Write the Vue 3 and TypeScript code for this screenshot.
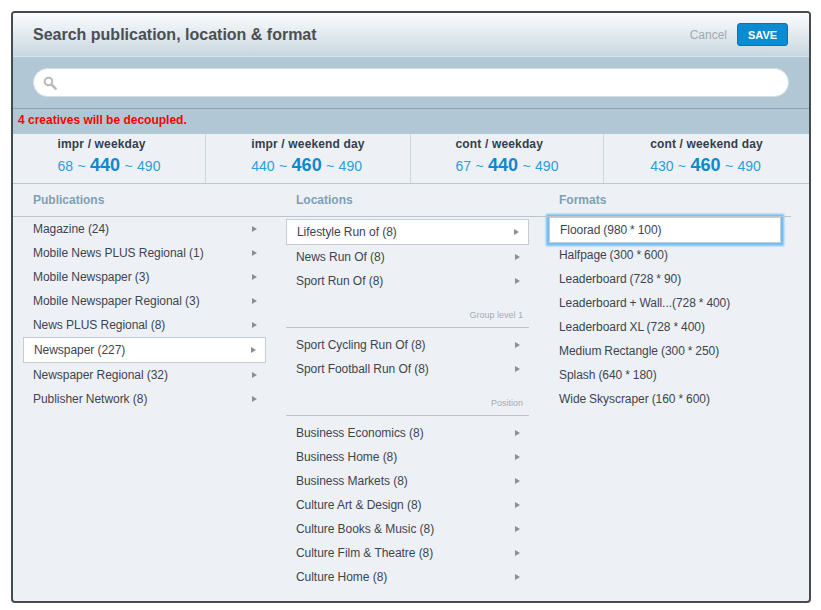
<script setup lang="ts">
interface Item { label: string; selected?: boolean }
const stats = [
  { title: 'impr / weekday', low: 68, mid: 440, high: 490 },
  { title: 'impr / weekend day', low: 440, mid: 460, high: 490 },
  { title: 'cont / weekday', low: 67, mid: 440, high: 490 },
  { title: 'cont / weekend day', low: 430, mid: 460, high: 490 },
]
const publications: Item[] = [
  { label: 'Magazine (24)' },
  { label: 'Mobile News PLUS Regional (1)' },
  { label: 'Mobile Newspaper (3)' },
  { label: 'Mobile Newspaper Regional (3)' },
  { label: 'News PLUS Regional (8)' },
  { label: 'Newspaper (227)', selected: true },
  { label: 'Newspaper Regional (32)' },
  { label: 'Publisher Network (8)' },
]
const groups: { title?: string; items: Item[] }[] = [
  { items: [{ label: 'Lifestyle Run of (8)', selected: true }, { label: 'News Run Of (8)' }, { label: 'Sport Run Of (8)' }] },
  { title: 'Group level 1', items: [{ label: 'Sport Cycling Run Of (8)' }, { label: 'Sport Football Run Of (8)' }] },
  { title: 'Position', items: [
    { label: 'Business Economics (8)' }, { label: 'Business Home (8)' }, { label: 'Business Markets (8)' },
    { label: 'Culture Art & Design (8)' }, { label: 'Culture Books & Music (8)' }, { label: 'Culture Film & Theatre (8)' }, { label: 'Culture Home (8)' },
  ] },
]
const formats = ['Halfpage (300 * 600)', 'Leaderboard (728 * 90)', 'Leaderboard + Wall...(728 * 400)', 'Leaderboard XL (728 * 400)', 'Medium Rectangle (300 * 250)', 'Splash (640 * 180)', 'Wide Skyscraper (160 * 600)']
</script>

<template>
  <div class="page">
    <section class="modal">
      <header class="head">
        <h1>Search publication, location &amp; format</h1>
        <div class="actions">
          <span class="cancel">Cancel</span>
          <button class="save" type="button">SAVE</button>
        </div>
      </header>
      <div class="search">
        <div class="field">
          <svg width="14" height="14" viewBox="0 0 14 14"><circle cx="5.5" cy="5.5" r="3.8" fill="none" stroke="#b8bbbe" stroke-width="2"/><path d="M8.5 8.5 12.6 12.6" stroke="#b8bbbe" stroke-width="2.6" stroke-linecap="round"/></svg>
        </div>
      </div>
      <div class="warn">4 creatives will be decoupled.</div>
      <div class="stats">
        <div v-for="s in stats" :key="s.title" class="stat">
          <div class="stat-in">
            <div class="stat-title">{{ s.title }}</div>
            <div class="stat-nums">{{ s.low }} ~ <b>{{ s.mid }}</b> ~ {{ s.high }}</div>
          </div>
        </div>
      </div>
      <div class="heads">
        <div class="h-pub">Publications</div>
        <div class="h-loc">Locations</div>
        <div class="h-fmt">Formats</div>
      </div>
      <div class="cols">
        <div class="col pub">
          <div v-for="i in publications" :key="i.label" class="row" :class="{ sel: i.selected }">
            <span>{{ i.label }}</span><i class="arrow"></i>
          </div>
        </div>
        <div class="col loc">
          <div v-for="(g, n) in groups" :key="n" class="group">
            <div v-if="g.title" class="group-title">{{ g.title }}</div>
            <div v-for="i in g.items" :key="i.label" class="row" :class="{ sel: i.selected }">
              <span>{{ i.label }}</span><i class="arrow"></i>
            </div>
          </div>
        </div>
        <div class="col fmt">
          <div class="row focus"><span>Floorad (980 * 100)</span></div>
          <div v-for="f in formats" :key="f" class="row"><span>{{ f }}</span></div>
        </div>
      </div>
    </section>
  </div>
</template>

<style>
html, body { background: #fff; }
</style>

<style scoped>
.page { width: 821px; height: 610px; padding: 11px 10px 7px 11px; box-sizing: border-box; font-family: "Liberation Sans", Arial, sans-serif; overflow: hidden; }
.modal { height: 592px; box-sizing: border-box; border: 2px solid #454c50; border-radius: 4px; background: #edf1f5; overflow: hidden; }
.head { height: 44px; box-sizing: border-box; padding: 0 21px 0 20px; display: flex; align-items: center; justify-content: space-between; background: linear-gradient(#fbfcfd, #c9d7e1); border-bottom: 1px solid #d4e2ec; }
h1 { margin: 0; font-size: 16px; font-weight: bold; color: #4b4f53; }
.actions { display: flex; align-items: center; gap: 10px; }
.cancel { font-size: 12px; color: #a3a9ae; }
.save { width: 51px; height: 23px; padding: 0; border: 1px solid #0a74b0; border-radius: 3px; background: #0a8bd2; color: #fff; font: bold 11px "Liberation Sans", Arial, sans-serif; }
.search { height: 52px; box-sizing: border-box; padding: 11px 20px 0 20px; background: #b1c7d5; border-bottom: 1px solid #8ea3b1; }
.field { height: 29px; box-sizing: border-box; border: 1px solid #d5dee4; border-radius: 15px; background: #fff; display: flex; align-items: center; padding-left: 9px; }
.warn { height: 25px; box-sizing: border-box; padding: 3px 0 0 5px; background: #b1c7d5; color: #fe0000; font-size: 12px; font-weight: bold; line-height: 16px; }
.stats { display: grid; grid-template-columns: 193px 205px 193px 1fr; height: 50px; box-sizing: border-box; border-bottom: 1px solid #bcc7ce; }
.stat { border-right: 1px solid #ccd6dd; text-align: center; box-sizing: border-box; }
.stat:last-child { border-right: 0; }
.stat-in { display: inline-block; text-align: left; padding-top: 2px; }
.stat-title { font-size: 12px; font-weight: bold; color: #353d4b; line-height: 16px; letter-spacing: 0.15px; }
.stat-nums { font-size: 14px; color: #2c9edb; line-height: 22px; margin-top: 2px; word-spacing: 0.5px; }
.stat-nums b { font-size: 18px; color: #0a8ad0; }
.heads { height: 33px; box-sizing: border-box; border-bottom: 1px solid #bcc5cc; margin-right: 18px; display: flex; font-size: 12px; font-weight: bold; color: #7da0b6; line-height: 33px; position: relative; z-index: 1; }
.h-pub { margin-left: 20px; width: 263px; }
.h-loc { width: 263px; }
.cols { display: flex; align-items: flex-start; }
.col { font-size: 12px; color: #3d4450; letter-spacing: -0.05px; }
.pub { width: 243px; margin-left: 10px; }
.loc { width: 243px; margin-left: 20px; margin-top: 2px; }
.fmt { width: 232px; margin-left: 20px; word-spacing: -0.3px; }
.row { height: 24px; box-sizing: border-box; display: flex; align-items: center; justify-content: space-between; padding: 0 9px 0 10px; }
.row.sel { height: 26px; background: #fff; border: 1px solid #c5ccd2; }
.row.focus { height: 26px; background: #fff; border: 1px solid #c5ccd2; box-shadow: 0 0 2px 3px #74bdf3; }
.group-title { height: 35px; box-sizing: border-box; border-bottom: 1px solid #bcc3c9; margin-bottom: 5px; padding-right: 6px; text-align: right; font-size: 9px; letter-spacing: 0; color: #a5abb0; line-height: 44px; }
.arrow { width: 0; height: 0; border-left: 5px solid #8a8f94; border-top: 3.5px solid transparent; border-bottom: 3.5px solid transparent; }
</style>
